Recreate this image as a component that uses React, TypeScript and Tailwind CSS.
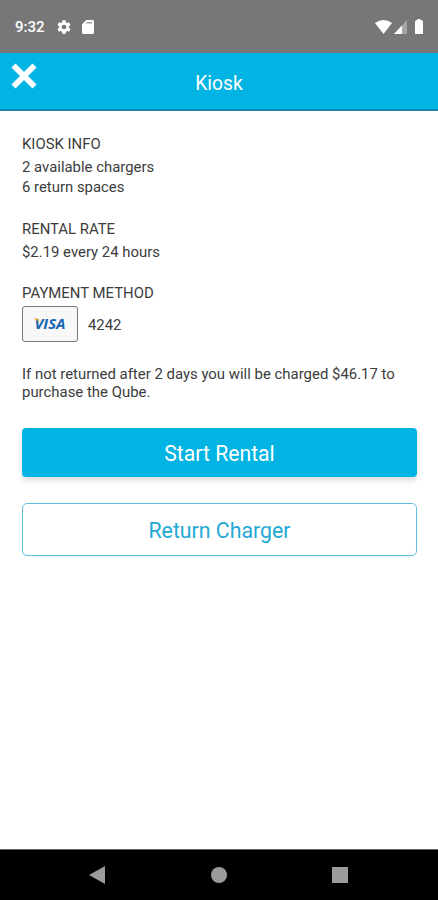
import type { ReactNode } from 'react';

type SectionProps = {
  title: string;
  children: ReactNode;
};

const kiosk = {
  chargers: 2,
  returnSpaces: 6,
  rate: '$2.19 every 24 hours',
  cardLast4: '4242',
  purchasePrice: '$46.17',
};

export default function App() {
  return (
    <div className="flex h-[900px] w-full flex-col overflow-hidden bg-white font-['Roboto',sans-serif] text-[#3c3c3c]">
      <StatusBar />
      <Header title="Kiosk" />

      <main className="flex flex-1 flex-col pt-[23px] pr-[21px] pl-[22px]">
        <div className="flex flex-col gap-[22px]">
          <Section title="KIOSK INFO">
            <p>{`${kiosk.chargers} available chargers`}</p>
            <p>{`${kiosk.returnSpaces} return spaces`}</p>
          </Section>
          <Section title="RENTAL RATE">
            <p>{kiosk.rate}</p>
          </Section>
        </div>

        <div className="mt-[21px]">
          <Section title="PAYMENT METHOD">
            <div className="flex items-center gap-[10px]">
              <VisaCard />
              <span className="pt-px">{kiosk.cardLast4}</span>
            </div>
          </Section>
        </div>

        <p className="mt-[24px] text-[14.93px] leading-[17.5px]">
          If not returned after 2 days you will be charged {kiosk.purchasePrice} to
          <br />
          purchase the Qube.
        </p>

        <button className="mt-[27px] h-[49px] w-full rounded-[4px] bg-[#02b4e3] pt-[2px] text-[21.2px] text-white shadow-[0_4px_5px_rgba(0,0,0,0.12)]">
          Start Rental
        </button>
        <button className="mt-[26px] h-[53px] w-full rounded-[5px] border-[1.5px] border-[#5fc0dd] pt-[2px] text-[21.3px] text-[#23a9d4]">
          Return Charger
        </button>
      </main>

      <NavigationBar />
    </div>
  );
}

function Section({ title, children }: SectionProps) {
  return (
    <section className="text-[14.9px] leading-[20px]">
      <h2 className="mb-[3px]">{title}</h2>
      {children}
    </section>
  );
}

function StatusBar() {
  return (
    <div className="flex h-[53px] shrink-0 items-center justify-between bg-[#777777] pr-[15px] pl-[15px] text-white">
      <div className="flex items-center">
        <span className="w-[41px] text-[15px] leading-[18px] font-medium">9:32</span>
        <svg className="size-[16px]" viewBox="0 0 24 24" fill="currentColor">
          <path d="M19.43 12.98c.04-.32.07-.64.07-.98s-.03-.66-.07-.98l2.11-1.65c.19-.15.24-.42.12-.64l-2-3.46c-.12-.22-.39-.3-.61-.22l-2.49 1c-.52-.4-1.08-.73-1.69-.98l-.38-2.65A.488.488 0 0 0 14 2h-4c-.25 0-.46.18-.49.42l-.38 2.65c-.61.25-1.17.59-1.69.98l-2.49-1c-.23-.09-.49 0-.61.22l-2 3.46c-.13.22-.07.49.12.64l2.11 1.65c-.04.32-.07.65-.07.98s.03.66.07.98l-2.11 1.65c-.19.15-.24.42-.12.64l2 3.46c.12.22.39.3.61.22l2.49-1c.52.4 1.08.73 1.69.98l.38 2.65c.03.24.24.42.49.42h4c.25 0 .46-.18.49-.42l.38-2.65c.61-.25 1.17-.59 1.69-.98l2.49 1c.23.09.49 0 .61-.22l2-3.46c.12-.22.07-.49-.12-.64l-2.11-1.65zM12 15.5A3.5 3.5 0 1 1 12 8.5a3.5 3.5 0 0 1 0 7z" />
        </svg>
        <svg className="ml-[10px] h-[14px] w-[12px]" viewBox="0 0 12 14">
          <path d="M4.3 0H10.5A1.5 1.5 0 0 1 12 1.5V12.5A1.5 1.5 0 0 1 10.5 14H1.5A1.5 1.5 0 0 1 0 12.5V4.3Z" fill="currentColor" />
          <path d="M4.3 2.8H10" stroke="#8a8a8a" strokeWidth="1.2" />
        </svg>
      </div>

      <div className="flex items-center">
        <svg className="h-[14px] w-[17px]" viewBox="0 0 17 14">
          <path d="M0 3Q8.5 -3 17 3L8.5 14Z" fill="currentColor" />
        </svg>
        <svg className="ml-[2px] h-[14px] w-[13px]" viewBox="0 0 13 14">
          <path d="M13 0V14H0Z" fill="#a5a5a5" />
          <path d="M8 5.4V14H0Z" fill="currentColor" />
        </svg>
        <svg className="ml-[8px] h-[15px] w-[8px]" viewBox="0 0 8 15">
          <path d="M2.5 0H5.5V1H6.5Q8 1.5 8 3V15H0V3Q0 1.5 1.5 1H2.5Z" fill="currentColor" />
        </svg>
      </div>
    </div>
  );
}

function Header({ title }: { title: string }) {
  return (
    <header className="grid h-[58px] shrink-0 grid-cols-[1fr_auto_1fr] items-center border-b-2 border-[#1585a9] bg-[#02b4e3] text-white">
      <button aria-label="Close" className="mb-[10px] ml-[11px] size-[26px]">
        <svg viewBox="0 0 26 26" className="size-full">
          <path d="M2.5 2.5L23.5 23.5M23.5 2.5L2.5 23.5" stroke="currentColor" strokeWidth="5.8" />
        </svg>
      </button>
      <h1 className="pt-[6px] text-[19.3px] leading-[24px]">{title}</h1>
    </header>
  );
}

function VisaCard() {
  return (
    <div className="flex h-[36px] w-[56px] items-center justify-center rounded-[3px] border border-[#777777] bg-[#f8f8f8]">
      <svg width="36" height="26" viewBox="0 0 36 26">
        <text
          x="2.5"
          y="18.3"
          textLength="31"
          lengthAdjust="spacingAndGlyphs"
          fill="#1465b2"
          className="font-['Open_Sans',sans-serif] text-[15px] leading-[18px] font-bold italic"
        >
          VISA
        </text>
        {/* gold corner of the logo */}
        <path d="M2 7.4H5.6Q6.6 7.6 6.8 8.8L7.2 11.2Q5.4 8.6 2 7.900Z" fill="#e5a53c" />
      </svg>
    </div>
  );
}

function NavigationBar() {
  return (
    <nav className="flex h-[51px] shrink-0 items-center justify-between border-t border-[#666666] bg-black pr-[90px] pl-[89px] text-[#9b9b9b]">
      <svg className="h-[18px] w-[16px]" viewBox="0 0 16 18">
        <path d="M0 9L16 0V18Z" fill="currentColor" />
      </svg>
      <span className="size-[16px] rounded-full bg-current" />
      <span className="size-[16px] bg-current" />
    </nav>
  );
}
